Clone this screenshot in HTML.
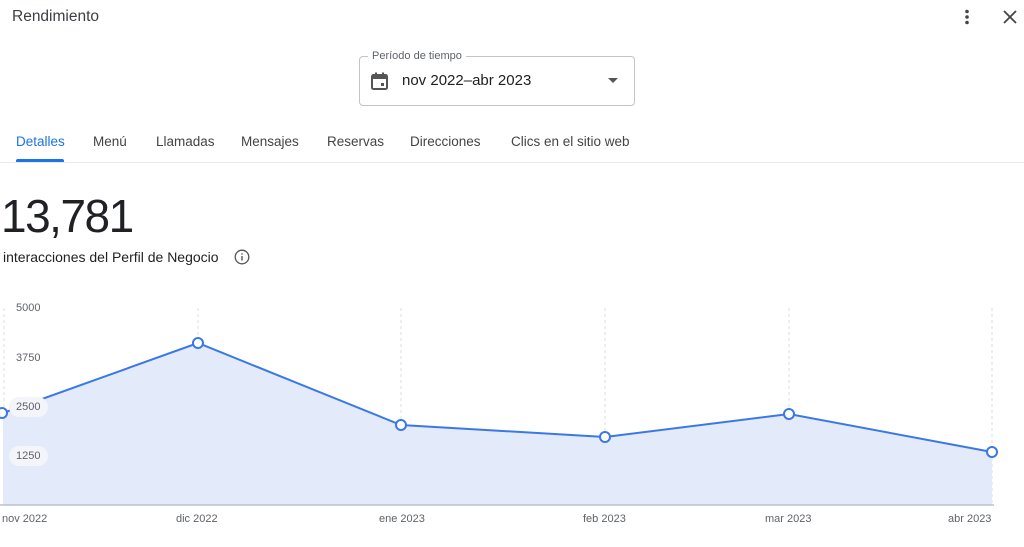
<!DOCTYPE html><html><head><meta charset="utf-8"><style>
body{margin:0;width:1024px;height:547px;background:#fff;font-family:"Liberation Sans",Arial,sans-serif;position:relative;overflow:hidden;color:#3c4043}
.a{position:absolute;white-space:nowrap}
.tab{position:absolute;top:134px;font-size:13.5px;color:#444}
</style></head><body>
<div class="a" style="left:12px;top:8px;font-size:15.5px;color:#3c4043">Rendimiento</div>
<svg class="a" style="left:958px;top:8px" width="18" height="18"><circle cx="9" cy="3.5" r="1.8" fill="#444"/><circle cx="9" cy="9" r="1.8" fill="#444"/><circle cx="9" cy="14.5" r="1.8" fill="#444"/></svg>
<svg class="a" style="left:1002px;top:9px" width="16" height="16"><path d="M2 2L14 14M14 2L2 14" stroke="#444" stroke-width="1.8"/></svg>
<div class="a" style="left:359px;top:56px;width:274px;height:48px;border:1px solid #c4c4c4;border-radius:4px"></div>
<div class="a" style="left:368px;top:50px;background:#fff;padding:0 4px;font-size:11px;color:#5f6368">Período de tiempo</div>
<svg class="a" style="left:370px;top:71px" width="20" height="20"><rect x="2" y="4" width="15" height="14" rx="1.5" fill="none" stroke="#555" stroke-width="2"/><rect x="2" y="4" width="15" height="4" fill="#555"/><rect x="5" y="1.5" width="2" height="3" fill="#555"/><rect x="12" y="1.5" width="2" height="3" fill="#555"/><rect x="11" y="12" width="3" height="3" fill="#555"/></svg>
<div class="a" style="left:402px;top:72px;font-size:15px;color:#202124">nov 2022–abr 2023</div>
<svg class="a" style="left:607px;top:77px" width="12" height="8"><path d="M1 1L6 6L11 1Z" fill="#555"/></svg>
<div class="tab" style="left:16px;color:#1a73e8">Detalles</div>
<div class="tab" style="left:93px">Menú</div>
<div class="tab" style="left:156px">Llamadas</div>
<div class="tab" style="left:241px">Mensajes</div>
<div class="tab" style="left:327px">Reservas</div>
<div class="tab" style="left:410px">Direcciones</div>
<div class="tab" style="left:511px">Clics en el sitio web</div>
<div class="a" style="left:16px;top:159px;width:48px;height:3px;background:#1a73e8;border-radius:2px 2px 0 0"></div>
<div class="a" style="left:0;top:162px;width:1024px;height:1px;background:#e8eaed"></div>
<div class="a" style="left:1px;top:189px;font-size:46px;color:#202124;letter-spacing:-1.5px">13,781</div>
<div class="a" style="left:3px;top:249px;font-size:14px;color:#202124">interacciones del Perfil de Negocio</div>
<svg class="a" style="left:234px;top:249px" width="16" height="16"><circle cx="8" cy="8" r="6.8" fill="none" stroke="#555" stroke-width="1.3"/><rect x="7.3" y="7" width="1.4" height="4.5" fill="#555"/><rect x="7.3" y="4.3" width="1.4" height="1.4" fill="#555"/></svg>
<svg class="a" style="left:0;top:0" width="1024" height="547">
<g stroke="#dadce0" stroke-dasharray="3,3"><path d="M4 308V505M198 308V505M401 308V505M605 308V505M789 308V505M992 308V505"/></g>
<path d="M3 413L198 343L401 425L605 437L789 414L992 452L992 505L3 505Z" fill="#e3eafa"/>
<path d="M0 505H994" stroke="#bdc1c6" stroke-width="1.5"/>
<path d="M3 413L198 343L401 425L605 437L789 414L992 452" fill="none" stroke="#3b78e7" stroke-width="2"/>
<g font-size="11" fill="#5f6368" font-family="Liberation Sans,sans-serif">
<rect x="9" y="397" width="39" height="20" rx="10" fill="#f3f5fb"/>
<rect x="9" y="446" width="39" height="20" rx="10" fill="#f3f5fb"/>
<text x="16" y="311">5000</text><text x="16" y="361">3750</text><text x="16" y="410">2500</text><text x="16" y="459">1250</text>
<text x="2" y="522">nov 2022</text><text x="176" y="522">dic 2022</text><text x="379" y="522">ene 2023</text><text x="583" y="522">feb 2023</text><text x="765" y="522">mar 2023</text><text x="948" y="522">abr 2023</text>
</g>
<g fill="#fff" stroke="#3b78e7" stroke-width="2"><circle cx="2" cy="413" r="5"/><circle cx="198" cy="343" r="5"/><circle cx="401" cy="425" r="5"/><circle cx="605" cy="437" r="5"/><circle cx="789" cy="414" r="5"/><circle cx="992" cy="452" r="5"/></g>
</svg>
</body></html>
